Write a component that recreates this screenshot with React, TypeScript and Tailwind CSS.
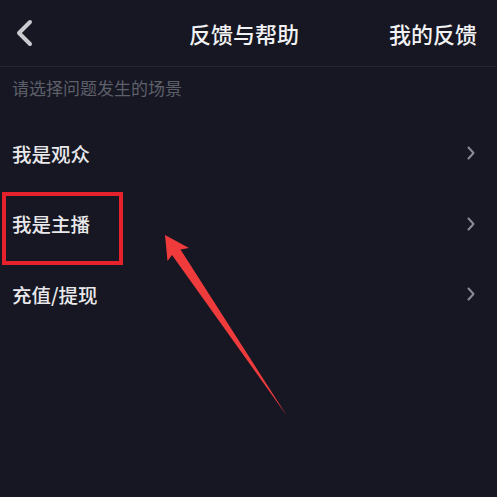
const scenes = ['我是观众', '我是主播', '充值/提现'];

function ChevronRight() {
  return (
    <svg width="10" height="14" viewBox="0 0 10 14" fill="none" aria-hidden="true">
      <path d="M2.5 1.5 L7.5 7 L2.5 12.5" stroke="#8a8b93" strokeWidth="2" strokeLinecap="round" strokeLinejoin="round" />
    </svg>
  );
}

export default function App() {
  return (
    <main
      className="relative h-[497px] w-[497px] overflow-hidden bg-[#161722] text-white"
      style={{ fontFamily: '"Noto Sans CJK SC", "Noto Sans", sans-serif' }}
    >
      <header className="flex h-[67px] items-center justify-between border-b border-[#23252f] pl-[14px] pr-[20px]">
        <svg width="22" height="28" viewBox="0 0 22 28" fill="none" aria-hidden="true">
          <path d="M16 3 L5 14 L16 25" stroke="#c9cacf" strokeWidth="4" strokeLinecap="round" strokeLinejoin="round" />
        </svg>
        <h1 className="ml-[63px] text-[22px] leading-none font-medium text-[#f2f2f4]">反馈与帮助</h1>
        <button className="text-[22px] leading-none font-medium text-[#f2f2f4]">我的反馈</button>
      </header>

      <p className="pl-[12px] pt-[10px] pb-[19px] text-[17px] leading-[22px] text-[#5d5f69]">请选择问题发生的场景</p>

      <ul>
        {scenes.map((s) => (
          <li key={s} className="flex h-[70.5px] items-center justify-between pl-[12px] pr-[21px]">
            <span className="text-[19.5px] font-medium text-[#e9e9ec]">{s}</span>
            <ChevronRight />
          </li>
        ))}
      </ul>

      <div className="absolute left-[2px] top-[192px] h-[73px] w-[121px] border-4 border-[#e5212b]" />

      <svg className="absolute inset-0" width="497" height="497" viewBox="0 0 497 497" aria-hidden="true">
        <polygon
          points="165,235 189,248 180.5,249.5 287,416 172,255 167.5,261"
          fill="#f03b3d"
        />
      </svg>
    </main>
  );
}
